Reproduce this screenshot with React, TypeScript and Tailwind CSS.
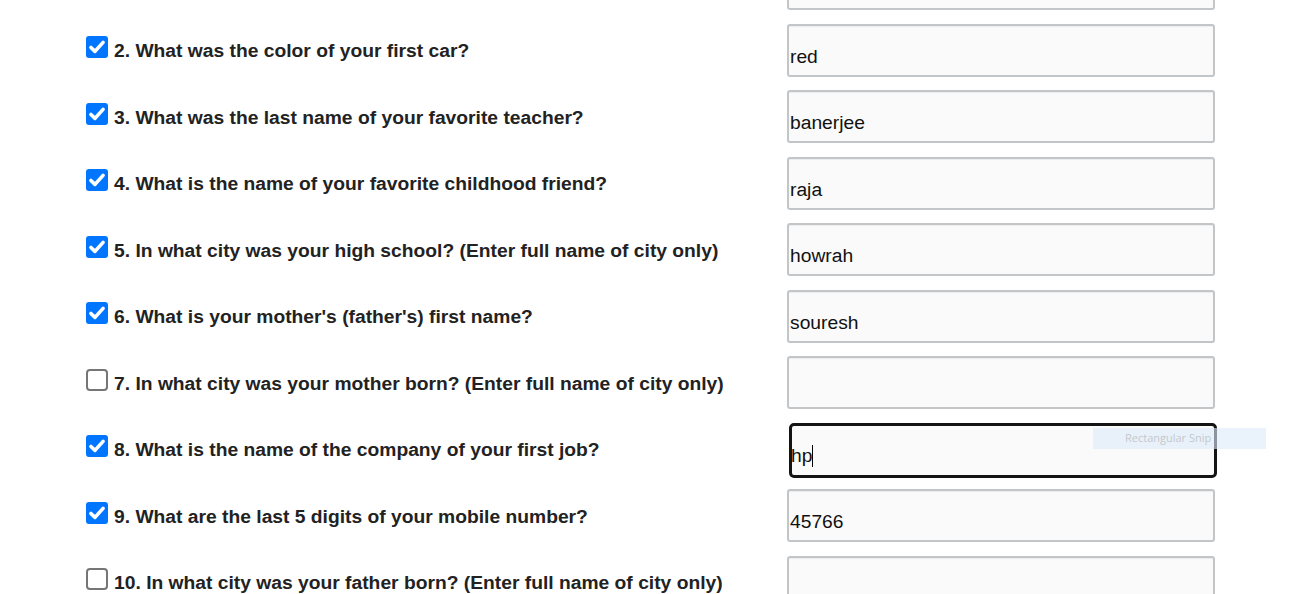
const questions = [
  { n: 1, text: '', checked: true, value: '' },
  { n: 2, text: 'What was the color of your first car?', checked: true, value: 'red' },
  { n: 3, text: 'What was the last name of your favorite teacher?', checked: true, value: 'banerjee' },
  { n: 4, text: 'What is the name of your favorite childhood friend?', checked: true, value: 'raja' },
  { n: 5, text: 'In what city was your high school? (Enter full name of city only)', checked: true, value: 'howrah' },
  { n: 6, text: "What is your mother's (father's) first name?", checked: true, value: 'souresh' },
  { n: 7, text: 'In what city was your mother born? (Enter full name of city only)', checked: false, value: '' },
  { n: 8, text: 'What is the name of the company of your first job?', checked: true, value: 'hp', focused: true },
  { n: 9, text: 'What are the last 5 digits of your mobile number?', checked: true, value: '45766' },
  { n: 10, text: 'In what city was your father born? (Enter full name of city only)', checked: false, value: '' },
];

function Checkbox({ checked }: { checked: boolean }) {
  if (!checked) {
    return <div className="w-[22px] h-[22px] shrink-0 mb-[6px] rounded-[4px] border-2 border-[#767676] bg-white" />;
  }
  return (
    <div className="w-[22px] h-[22px] shrink-0 mb-[6px] rounded-[3px] bg-[#0075ff] flex items-center justify-center">
      <svg width="18" height="18" viewBox="0 0 16 16">
        <path d="M2.6 8.4 L6.2 11.9 L13.4 3.9" stroke="white" strokeWidth="3.2" fill="none" strokeLinecap="round" strokeLinejoin="round" />
      </svg>
    </div>
  );
}

export default function App() {
  return (
    <div className="relative w-[1305px] h-[594px] overflow-hidden bg-white" style={{ fontFamily: '"Liberation Sans", Arial, sans-serif' }}>
      <div className="flex flex-col gap-[13.5px] pl-[86px] mt-[-43px]">
        {questions.map((q) => (
          <div key={q.n} className="flex items-center h-[53px]">
            <div className="w-[701px] flex items-center gap-[6px]">
              {q.text && (
                <>
                  <Checkbox checked={q.checked} />
                  <span className="mt-[3px] text-[19.25px] font-bold text-[#222] whitespace-nowrap">
                    {q.n}. {q.text}
                  </span>
                </>
              )}
            </div>
            {q.focused ? (
              <div className="relative z-10 ml-[2px] mt-[2px] w-[428px] h-[55px] rounded-[5px] border-[3px] border-[#141414] bg-[#fafafa] pt-[19px] pl-0 -ml-0 text-[19.25px] leading-[22px] text-[#111] flex items-start">
                <span className="-ml-[1px]">{q.value}</span>
                <span className="w-px h-[22px] bg-black" />
              </div>
            ) : (
              <div className="w-[428px] h-[53px] rounded-[3px] border-2 border-[#c3c6c8] bg-[#fafafa] pt-[20px] pl-[1px] text-[19.25px] leading-[22px] text-[#111] shadow-[inset_0_1px_1px_rgba(0,0,0,0.06)]">
                {q.value}
              </div>
            )}
          </div>
        ))}
      </div>
      <div className="absolute z-20 left-[1093px] top-[428px] w-[173px] h-[21px] bg-[#dcebfa]/60 flex items-center pl-[32px] text-[11px] text-[#c4c8cc]" style={{ fontFamily: '"Open Sans", sans-serif' }}>
        Rectangular Snip
      </div>
    </div>
  );
}
